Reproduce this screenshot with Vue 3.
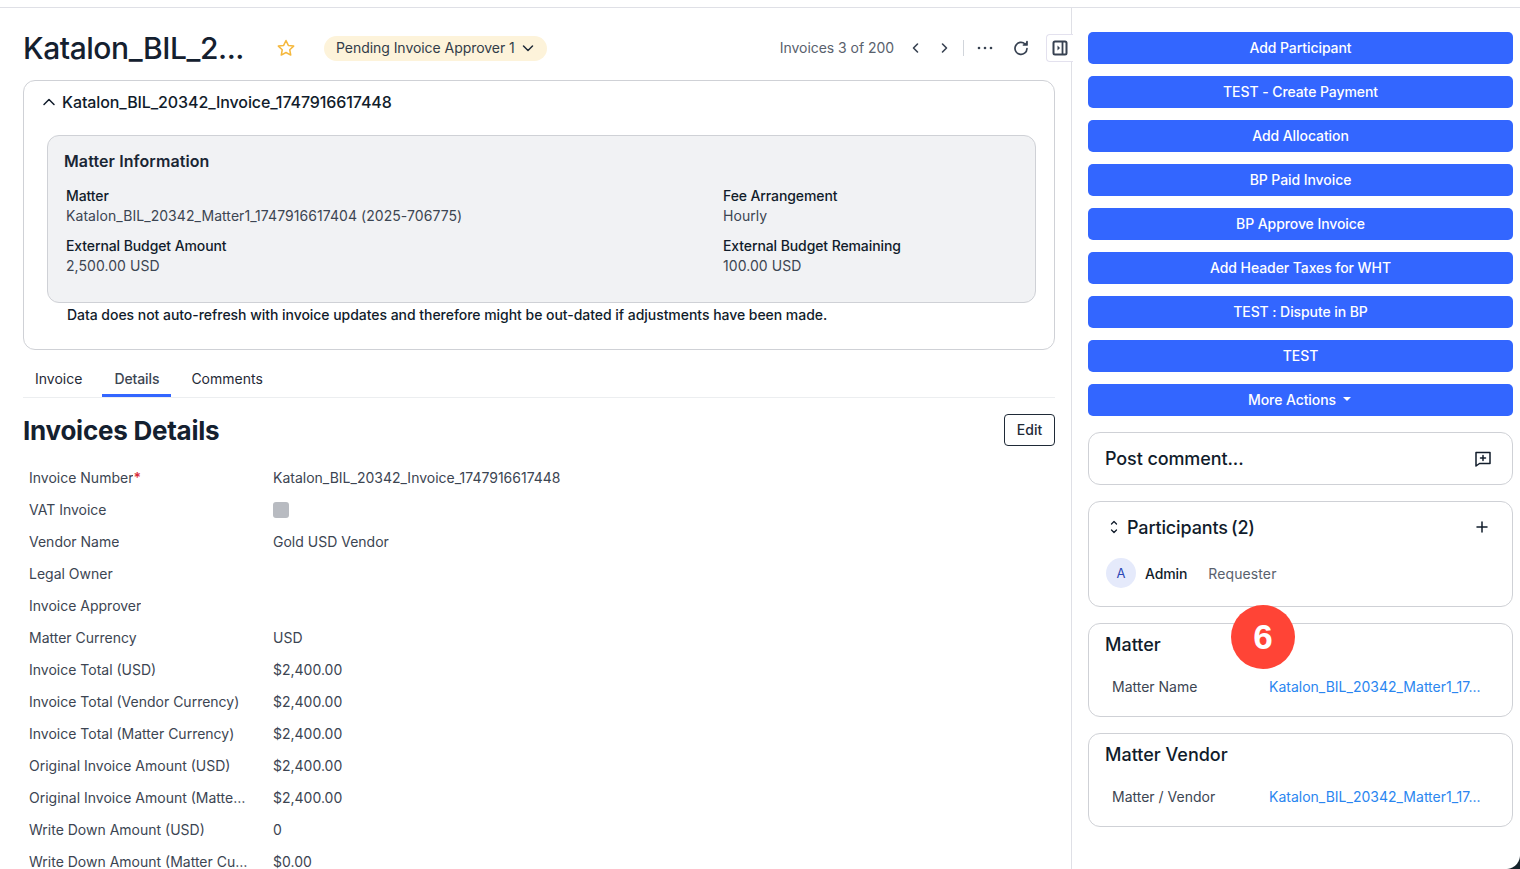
<template>
  <div class="page">
    <main class="left">
      <header class="top">
        <h1 class="title">Katalon_BIL_2...</h1>
        <svg class="star" width="20" height="20" viewBox="0 0 24 24" fill="none" stroke="#f5b83d" stroke-width="1.800" stroke-linejoin="round">
          <path d="M12 3l2.800 5.900 6.400.8-4.700 4.400 1.200 6.400L12 17.400l-5.700 3.100 1.200-6.400-4.700-4.400 6.400-.8z" />
        </svg>
        <div class="status">
          <span class="status-text">Pending Invoice Approver 1</span>
          <svg width="14" height="14" viewBox="0 0 14 14" fill="none" stroke="#1f2a37" stroke-width="1.500" stroke-linecap="round" stroke-linejoin="round">
            <path d="M2.500 5l4.500 4.500L11.500 5" />
          </svg>
        </div>
        <div class="pager">
          <span class="pager-text">Invoices 3 of 200</span>
          <svg class="prev" width="12" height="12" viewBox="0 0 12 12" fill="none" stroke="#374151" stroke-width="1.600" stroke-linecap="round" stroke-linejoin="round">
            <path d="M7.500 2L3.500 6l4 4" />
          </svg>
          <svg class="next" width="12" height="12" viewBox="0 0 12 12" fill="none" stroke="#374151" stroke-width="1.600" stroke-linecap="round" stroke-linejoin="round">
            <path d="M4.500 2l4 4-4 4" />
          </svg>
          <span class="divider"></span>
          <svg class="dots" width="16" height="4" viewBox="0 0 16 4" fill="#374151">
            <circle cx="2" cy="2" r="1.300" />
            <circle cx="8" cy="2" r="1.300" />
            <circle cx="14" cy="2" r="1.300" />
          </svg>
          <svg class="refresh" width="16" height="16" viewBox="0 0 16 16" fill="none" stroke="#374151" stroke-width="1.700" stroke-linecap="round" stroke-linejoin="round">
            <path d="M14 8.500a6 6 0 1 1-1.900-4.500" />
            <path d="M14 1.500v3.500h-3.500" fill="#374151" />
          </svg>
        </div>
      </header>

      <section class="summary">
        <div class="summary-head">
          <svg width="14" height="14" viewBox="0 0 14 14" fill="none" stroke="#111c2b" stroke-width="1.500" stroke-linecap="round" stroke-linejoin="round">
            <path d="M2 9.500L7 4.500l5 5" />
          </svg>
          <span>Katalon_BIL_20342_Invoice_1747916617448</span>
        </div>
        <div class="matter-box">
          <h3>Matter Information</h3>
          <div class="matter-grid">
            <div v-for="item in matterInfo" :key="item.label" class="matter-item">
              <div class="matter-label">{{ item.label }}</div>
              <div class="matter-value">{{ item.value }}</div>
            </div>
          </div>
        </div>
        <p class="note">Data does not auto-refresh with invoice updates and therefore might be out-dated if adjustments have been made.</p>
      </section>

      <nav class="tabs">
        <a v-for="tab in tabs" :key="tab" :class="['tab', { active: tab === 'Details' }]">{{ tab }}</a>
      </nav>

      <div class="details-head">
        <h2>Invoices Details</h2>
        <button class="edit">Edit</button>
      </div>

      <div class="rows">
        <div v-for="row in rows" :key="row.label" class="row">
          <div class="row-label"><span class="row-label-text">{{ row.label }}</span><span v-if="row.required" class="req">*</span></div>
          <div class="row-value">
            <span v-if="row.checkbox" class="check"></span>
            <template v-else>{{ row.value }}</template>
          </div>
        </div>
      </div>
    </main>

    <aside class="right">
      <button class="toggle" aria-label="Toggle panel">
        <svg width="16" height="16" viewBox="0 0 16 16" fill="none">
          <rect x="1.500" y="1.500" width="13" height="13" rx="1.500" stroke="#374151" stroke-width="2" />
          <path d="M10.500 1.500v13" stroke="#374151" stroke-width="1.800" />
          <path d="M5.500 5.500L8 8l-2.500 2.500z" fill="#374151" />
        </svg>
      </button>

      <div class="actions">
        <button v-for="action in actions" :key="action" class="action"><span>{{ action }}</span></button>
        <button class="action"><span>More Actions</span><span class="caret"></span></button>
      </div>

      <div class="card comment">
        <span>Post comment...</span>
        <svg width="18" height="18" viewBox="0 0 18 18" fill="none" stroke="#111c2b" stroke-width="1.500" stroke-linejoin="round" stroke-linecap="round">
          <path d="M2 2.500h14v11H5.500L2 16z" />
          <path d="M9 5.500v5M6.500 8h5" />
        </svg>
      </div>

      <div class="card participants">
        <div class="part-head">
          <svg width="10" height="16" viewBox="0 0 10 16" fill="none" stroke="#111c2b" stroke-width="1.300" stroke-linecap="round" stroke-linejoin="round">
            <path d="M2.500 5L5 2.500 7.500 5M2.500 11L5 13.500 7.500 11" />
          </svg>
          <span class="part-title">Participants (2)</span>
          <svg class="plus" width="12" height="12" viewBox="0 0 12 12" stroke="#111c2b" stroke-width="1.500" stroke-linecap="round">
            <path d="M6 1v10M1 6h10" />
          </svg>
        </div>
        <div class="person">
          <span class="avatar">A</span>
          <span class="person-name">Admin</span>
          <span class="person-role">Requester</span>
        </div>
      </div>

      <div v-for="card in linkCards" :key="card.title" class="card link-card">
        <div class="link-title">{{ card.title }}</div>
        <div class="link-row">
          <span class="link-label">{{ card.label }}</span>
          <a class="link-value">Katalon_BIL_20342_Matter1_17...</a>
        </div>
      </div>
    </aside>

    <div class="step-badge">6</div>
    <div class="corner"></div>
  </div>
</template>

<script setup>
const matterInfo = [
  { label: 'Matter', value: 'Katalon_BIL_20342_Matter1_1747916617404 (2025-706775)' },
  { label: 'Fee Arrangement', value: 'Hourly' },
  { label: 'External Budget Amount', value: '2,500.00 USD' },
  { label: 'External Budget Remaining', value: '100.00 USD' }
]

const tabs = ['Invoice', 'Details', 'Comments']

const rows = [
  { label: 'Invoice Number', value: 'Katalon_BIL_20342_Invoice_1747916617448', required: true },
  { label: 'VAT Invoice', checkbox: true },
  { label: 'Vendor Name', value: 'Gold USD Vendor' },
  { label: 'Legal Owner', value: '' },
  { label: 'Invoice Approver', value: '' },
  { label: 'Matter Currency', value: 'USD' },
  { label: 'Invoice Total (USD)', value: '$2,400.00' },
  { label: 'Invoice Total (Vendor Currency)', value: '$2,400.00' },
  { label: 'Invoice Total (Matter Currency)', value: '$2,400.00' },
  { label: 'Original Invoice Amount (USD)', value: '$2,400.00' },
  { label: 'Original Invoice Amount (Matter Currency)', value: '$2,400.00' },
  { label: 'Write Down Amount (USD)', value: '0' },
  { label: 'Write Down Amount (Matter Currency)', value: '$0.00' }
]

const actions = [
  'Add Participant',
  'TEST - Create Payment',
  'Add Allocation',
  'BP Paid Invoice',
  'BP Approve Invoice',
  'Add Header Taxes for WHT',
  'TEST : Dispute in BP',
  'TEST'
]

const linkCards = [
  { title: 'Matter', label: 'Matter Name' },
  { title: 'Matter Vendor', label: 'Matter / Vendor' }
]
</script>

<style>
html,
body {
  margin: 0;
  background: #fff;
}
</style>

<style scoped>
.page {
  position: relative;
  display: flex;
  width: 1520px;
  height: 869px;
  padding-top: 8px;
  box-sizing: border-box;
  overflow: hidden;
  font-family: Inter, 'Liberation Sans', sans-serif;
  color: #111c2b;
  background: linear-gradient(#dfe0e6, #dfe0e6) 0 7px / 100% 1px no-repeat #fff;
}

.left {
  width: 1071px;
  flex: none;
  box-sizing: border-box;
  padding: 0 16px 0 23px;
}

.top {
  display: flex;
  align-items: center;
  height: 72px;
  box-sizing: border-box;
  padding-top: 8px;
}

.title {
  width: 253px;
  margin: 0;
  font-size: 30px;
  line-height: 40px;
  font-weight: 500;
  letter-spacing: -0.45px;
  white-space: nowrap;
  color: #14202f;
}

.star {
  flex: none;
}

.status {
  display: flex;
  align-items: center;
  gap: 6px;
  height: 25px;
  margin-left: 28px;
  padding: 0 12px;
  border-radius: 13px;
  background: #fdf3da;
  font-size: 14px;
  letter-spacing: -0.05px;
  color: #323c49;
  white-space: nowrap;
}

.status-text {
  margin-bottom: 2px;
}

.pager {
  display: flex;
  align-items: center;
  margin-left: auto;
  margin-right: 26px;
  font-size: 14px;
  letter-spacing: -0.05px;
  color: #59616d;
}

.pager-text {
  margin-bottom: 2px;
  white-space: nowrap;
}

.prev,
.next {
  margin-left: 16px;
}

.divider {
  width: 1px;
  height: 16px;
  margin: 0 13px 0 13px;
  background: #d1d5db;
}

.refresh {
  margin-left: 20px;
}

.summary {
  height: 270px;
  box-sizing: border-box;
  padding: 11px 18px 0 23px;
  border: 1px solid #cfd1d6;
  border-radius: 12px;
}

.summary-head {
  display: flex;
  align-items: center;
  gap: 6px;
  height: 20px;
  margin-left: -5px;
  font-size: 16px;
  font-weight: 500;
  letter-spacing: -0.1px;
  white-space: nowrap;
}

.matter-box {
  height: 168px;
  margin-top: 23px;
  box-sizing: border-box;
  padding: 15px 16px 0;
  border: 1px solid #cfd1d6;
  border-radius: 12px;
  background: #f1f2f4;
}

.matter-box h3 {
  margin: 0 0 15px;
  font-size: 16px;
  line-height: 20px;
  font-weight: 600;
  letter-spacing: 0.1px;
  color: #1a2634;
}

.matter-grid {
  display: grid;
  grid-template-columns: 657px 1fr;
  row-gap: 10px;
  padding-left: 2px;
}

.matter-label {
  font-size: 14px;
  line-height: 20px;
  font-weight: 500;
  letter-spacing: -0.1px;
  color: #111c2b;
}

.matter-value {
  font-size: 14px;
  line-height: 20px;
  letter-spacing: 0.06px;
  color: #3c4552;
}

.note {
  margin: 2px 0 0 20px;
  font-size: 14px;
  line-height: 20px;
  font-weight: 500;
  letter-spacing: -0.04px;
  color: #111c2b;
  white-space: nowrap;
}

.tabs {
  display: flex;
  gap: 8px;
  height: 48px;
  box-sizing: border-box;
  border-bottom: 1px solid #eceef0;
}

.tab {
  display: flex;
  align-items: center;
  height: 47px;
  box-sizing: border-box;
  padding: 16px 12px 7px;
  font-size: 14px;
  color: #1f2a37;
}

.tab.active {
  padding-bottom: 4px;
  border-bottom: 3px solid #3366ff;
  font-weight: 500;
  letter-spacing: -0.1px;
  color: #3c4552;
}

.details-head {
  display: flex;
  align-items: center;
  justify-content: space-between;
  height: 63px;
  box-sizing: border-box;
  padding-top: 1px;
}

.details-head h2 {
  margin: 2px 0 0;
  font-size: 26px;
  line-height: 32px;
  font-weight: 700;
  letter-spacing: -0.25px;
  color: #14202f;
}

.edit {
  width: 51px;
  height: 32px;
  padding: 0 0 1px;
  border: 1px solid #1f2a37;
  border-radius: 4px;
  background: #fff;
  font: 500 14px Inter, 'Liberation Sans', sans-serif;
  color: #1f2a37;
}

.rows {
  padding-left: 6px;
}

.row {
  display: flex;
  align-items: center;
  height: 32px;
  font-size: 14px;
}

.row-label {
  display: flex;
  width: 220px;
  margin-right: 24px;
  flex: none;
  color: #3c4552;
}

.row-label-text {
  overflow: hidden;
  white-space: nowrap;
  text-overflow: ellipsis;
}

.req {
  color: #d92d3a;
  font-weight: 600;
}

.row-value {
  color: #3c4552;
  white-space: nowrap;
}

.check {
  display: block;
  width: 16px;
  height: 16px;
  margin-top: 2px;
  border-radius: 3px;
  background: #b8bbc1;
}

.right {
  position: relative;
  flex: none;
  width: 449px;
  box-sizing: border-box;
  padding: 24px 7px 0 16px;
  border-left: 1px solid #dfe0e6;
}

.toggle {
  position: absolute;
  top: 26px;
  left: -26px;
  display: flex;
  align-items: center;
  justify-content: center;
  width: 27px;
  height: 28px;
  padding: 0;
  border: 1px solid #e3e1ee;
  border-right: 0;
  border-radius: 4px 0 0 4px;
  background: #fff;
}

.actions {
  display: flex;
  flex-direction: column;
  gap: 12px;
}

.action {
  display: flex;
  align-items: center;
  justify-content: center;
  gap: 7px;
  height: 32px;
  padding: 0 0 2px;
  border: 0;
  border-radius: 5px;
  background: #3366ff;
  font: 500 14px Inter, 'Liberation Sans', sans-serif;
  letter-spacing: -0.08px;
  color: #fff;
}

.caret {
  width: 0;
  height: 0;
  margin-right: 2px;
  border-left: 4px solid transparent;
  border-right: 4px solid transparent;
  border-top: 4px solid #fff;
}

.card {
  box-sizing: border-box;
  margin-top: 16px;
  border: 1px solid #cfd1d6;
  border-radius: 12px;
}

.comment {
  display: flex;
  align-items: center;
  justify-content: space-between;
  height: 53px;
  padding: 0 20px 0 16px;
  font-size: 18px;
  font-weight: 500;
  letter-spacing: -0.1px;
}

.participants {
  height: 106px;
  padding: 0 16px;
}

.part-head {
  display: flex;
  align-items: center;
  gap: 8px;
  height: 50px;
  padding: 0 0 0 4px;
  font-size: 18px;
  font-weight: 500;
}

.part-title {
  letter-spacing: -0.15px;
  word-spacing: -1.500px;
}

.plus {
  margin-left: auto;
  margin-right: 8px;
}

.person {
  display: flex;
  align-items: center;
  height: 32px;
  margin-top: 5px;
}

.avatar {
  display: flex;
  align-items: center;
  justify-content: center;
  width: 30px;
  height: 30px;
  margin-left: 1px;
  border-radius: 50%;
  background: #e5eafb;
  font-size: 13px;
  color: #2b47b5;
}

.person-name {
  margin-left: 9px;
  font-size: 14px;
  font-weight: 500;
  letter-spacing: -0.1px;
}

.person-role {
  margin-left: 21px;
  font-size: 14px;
  letter-spacing: 0.1px;
  color: #59616d;
}

.link-card {
  height: 94px;
  padding: 0 16px;
}

.link-title {
  height: 42px;
  line-height: 42px;
  font-size: 18px;
  font-weight: 500;
}

.link-row {
  display: flex;
  margin-top: 11px;
  padding-left: 7px;
  font-size: 14px;
  line-height: 20px;
}

.link-label {
  width: 157px;
  flex: none;
  color: #3c4552;
}

.link-value {
  color: #2b86f0;
  white-space: nowrap;
}

.step-badge {
  position: absolute;
  left: 1231px;
  top: 605px;
  display: flex;
  align-items: center;
  justify-content: center;
  width: 64px;
  height: 64px;
  border-radius: 50%;
  background: #ff4436;
  font: 700 35px 'Liberation Sans', sans-serif;
  color: #fff;
}

.corner {
  position: absolute;
  right: 0;
  bottom: 0;
  width: 14px;
  height: 14px;
  background: radial-gradient(circle at 0 0, transparent 13.500px, #16232b 14.500px);
}
</style>
